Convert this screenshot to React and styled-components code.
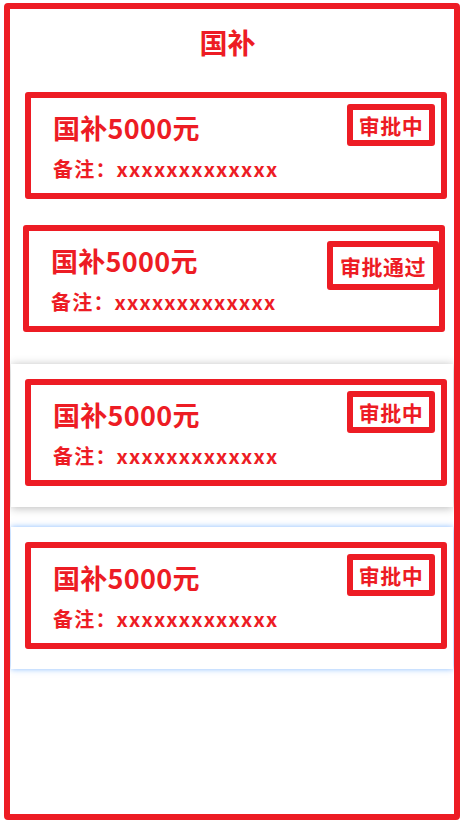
import React from "react";
import styled, { createGlobalStyle } from "styled-components";

const RED = "#ed1c24";

const items = [
    { id: 1, status: "审批中", pt: 14, pb: 13, mt: 0, shift: 0, shadow: "none" },
    { id: 2, status: "审批通过", pt: 13, pb: 14, mt: 0, shift: -2, shadow: "none" },
    { id: 3, status: "审批中", pt: 15, pb: 21, mt: 18, shift: 0, shadow: "0 1px 9px rgba(0, 0, 0, 0.28)" },
    { id: 4, status: "审批中", pt: 15, pb: 20, mt: 20, shift: 0, shadow: "0 0 6px rgba(70, 150, 255, 0.65)" },
];

export default function App(){
    return(
        <>
            <GlobalStyle />
            <Frame>
                <PageTitle>国补</PageTitle>
                <List>
                    {items.map((item) => (
                        <Item key={item.id} $pt={item.pt} $pb={item.pb} $mt={item.mt} $shadow={item.shadow}>
                            <Card $shift={item.shift}>
                                <TextCol>
                                    <Amount>国补5000元</Amount>
                                    <Remark>备注：xxxxxxxxxxxxx</Remark>
                                </TextCol>
                                <Badge $wide={item.status.length > 3}>{item.status}</Badge>
                            </Card>
                        </Item>
                    ))}
                </List>
            </Frame>
        </>
    );
}

const GlobalStyle = createGlobalStyle`
    *{
        box-sizing: border-box;
    }
    body{
        margin: 0;
        background: #ffffff;
        font-family: "Noto Sans CJK SC", "Noto Sans", sans-serif;
    }
`;

const Frame = styled.main`
    width: 456px;
    height: 817px;
    margin: 3px 0 0 4px;
    border: 6px solid ${RED};
    border-radius: 4px;
    background: #ffffff;
    overflow: hidden;
`;

const PageTitle = styled.h1`
    margin: 0;
    padding: 14px 9px 0 0;
    font-size: 28px;
    line-height: 38px;
    font-weight: 700;
    color: ${RED};
    text-align: center;
`;

const List = styled.section`
    margin-top: 17px;
    display: flex;
    flex-direction: column;
`;

const Item = styled.div`
    margin: ${({ $mt }) => $mt}px 1px 0;
    padding: ${({ $pt }) => $pt}px 6px ${({ $pb }) => $pb}px 14px;
    background: #ffffff;
    box-shadow: ${({ $shadow }) => $shadow};
`;

const Card = styled.div`
    height: 107px;
    margin-left: ${({ $shift }) => $shift}px;
    margin-right: ${({ $shift }) => -$shift}px;
    border: 6px solid ${RED};
    border-radius: 3px;
    padding-left: 22px;
    display: flex;
    justify-content: space-between;
    align-items: flex-start;
    color: ${RED};
    font-weight: 700;
`;

const TextCol = styled.div`
    padding-top: 12px;
    display: flex;
    flex-direction: column;
`;

const Amount = styled.div`
    font-size: 27px;
    line-height: 35px;
    letter-spacing: 0.3px;
`;

const Remark = styled.div`
    margin-top: 10px;
    font-size: 20px;
    line-height: 28px;
    letter-spacing: 1.2px;
`;

const Badge = styled.span`
    margin: ${({ $wide }) => ($wide ? "10px 0 0 0" : "6px 6px 0 0")};
    width: ${({ $wide }) => ($wide ? 112 : 88)}px;
    height: ${({ $wide }) => ($wide ? 49 : 42)}px;
    border: 6px solid ${RED};
    border-radius: 3px;
    display: flex;
    align-items: center;
    justify-content: center;
    font-size: 21px;
    letter-spacing: 0.5px;
    white-space: nowrap;
`;
